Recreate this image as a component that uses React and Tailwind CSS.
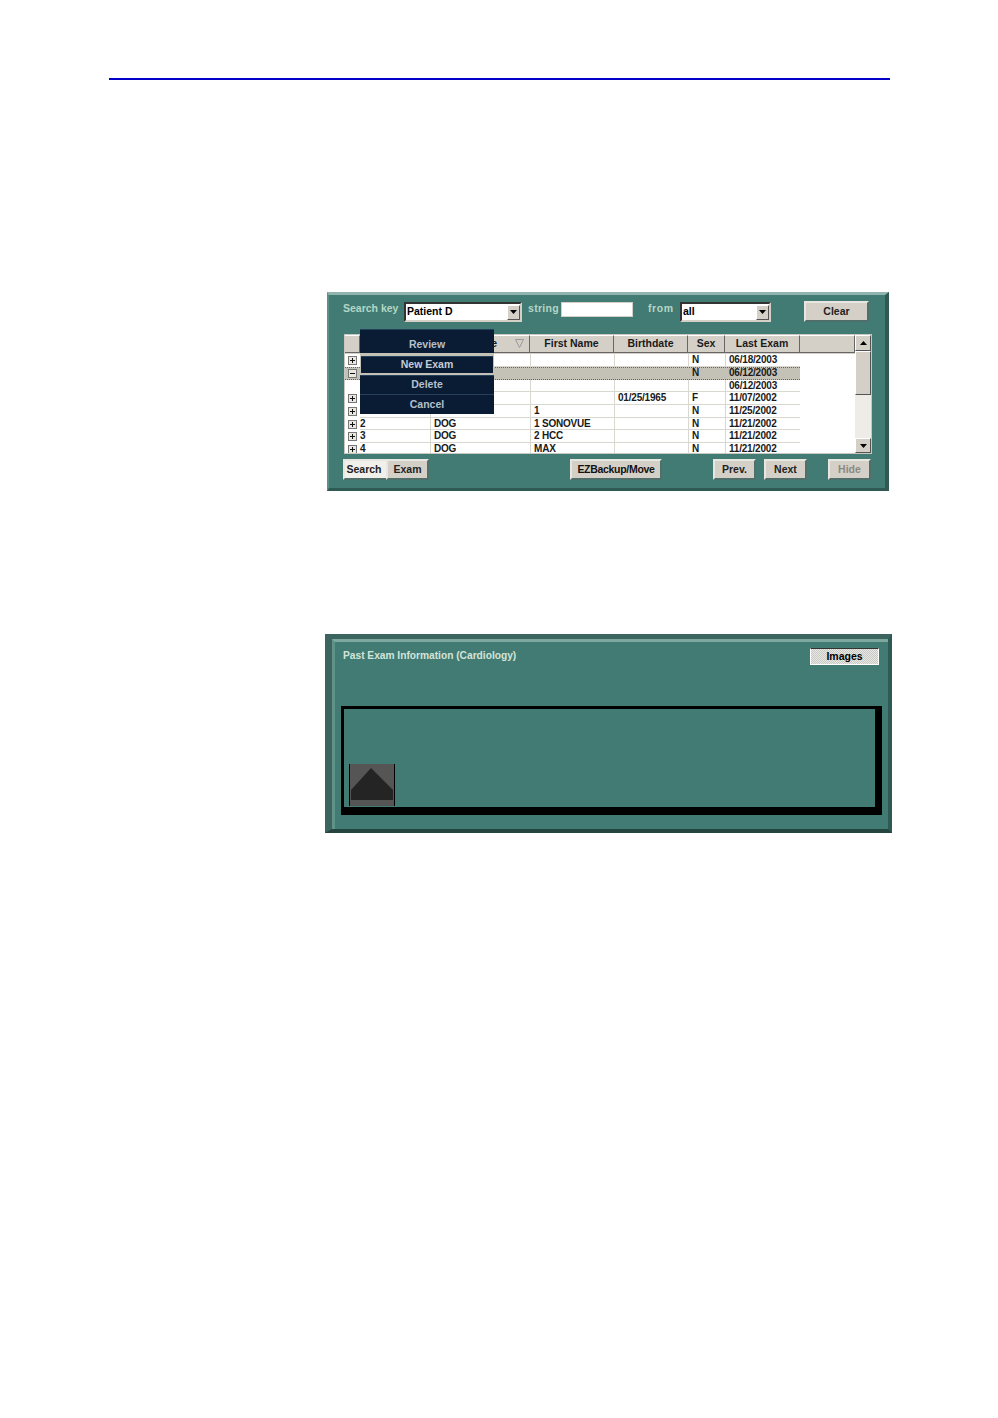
const columns = 'grid-cols-[15px_70px_100px_84px_74px_37px_75px_55px]'

const rows = [
  { id: '', last: '', first: '', birth: '', sex: 'N', exam: '06/18/2003', icon: 'plus', h: 'h-[13px]' },
  { id: '', last: '', first: '', birth: '', sex: 'N', exam: '06/12/2003', icon: 'minus', h: 'h-[13px]', selected: true },
  { id: '', last: '', first: '', birth: '', sex: '', exam: '06/12/2003', icon: '', h: 'h-[12px]' },
  { id: '', last: '', first: '', birth: '01/25/1965', sex: 'F', exam: '11/07/2002', icon: 'plus', h: 'h-[13px]' },
  { id: '', last: '', first: '1', birth: '', sex: 'N', exam: '11/25/2002', icon: 'plus', h: 'h-[13px]' },
  { id: '2', last: 'DOG', first: '1 SONOVUE', birth: '', sex: 'N', exam: '11/21/2002', icon: 'plus', h: 'h-[12px]' },
  { id: '3', last: 'DOG', first: '2 HCC', birth: '', sex: 'N', exam: '11/21/2002', icon: 'plus', h: 'h-[13px]' },
  { id: '4', last: 'DOG', first: 'MAX', birth: '', sex: 'N', exam: '11/21/2002', icon: 'plus', h: 'h-[12px]' },
]

function ExpandIcon({ type }) {
  if (!type) return null
  return (
    <svg width="9" height="9" viewBox="0 0 9 9" className="ml-[3px]">
      <rect x="0.5" y="0.5" width="8" height="8" fill="#e8e8e0" stroke="#777" />
      <path d="M2 4.5h5" stroke="#111" />
      {type === 'plus' && <path d="M4.5 2v5" stroke="#111" />}
    </svg>
  )
}

function Arrow({ up }) {
  return (
    <svg width="7" height="4" viewBox="0 0 7 4">
      <path d={up ? 'M3.5 0L7 4H0z' : 'M0 0h7L3.5 4z'} fill="#000" />
    </svg>
  )
}

function ArrowBox({ up, className }) {
  return (
    <div className={`flex items-center justify-center bg-[#d4d0c8] border border-t-white border-l-white border-r-[#555] border-b-[#555] ${className}`}>
      <Arrow up={up} />
    </div>
  )
}

function Select({ value, width }) {
  return (
    <div className={`h-[20px] flex items-center justify-between bg-white border-2 border-t-[#333] border-l-[#333] border-r-[#d4d0c8] border-b-[#d4d0c8] ${width}`}>
      <span className="pl-[1px] text-[10.5px] font-bold text-black">{value}</span>
      <ArrowBox className="w-[13px] h-[15px]" />
    </div>
  )
}

function Button({ children, className }) {
  return (
    <div className={`h-[21px] flex items-center justify-center bg-[#d4d0c8] border-2 border-t-[#e8e6e0] border-l-[#e8e6e0] border-r-[#4f6f6a] border-b-[#4f6f6a] text-[10.5px] font-bold ${className}`}>
      {children}
    </div>
  )
}

function MenuItem({ children, className }) {
  return (
    <div className={`flex items-center justify-center bg-[#0a1c34] border-t border-t-[#26405c] text-[10.5px] font-bold text-[#b4c0cc] ${className}`}>
      {children}
    </div>
  )
}

function Cell({ children, selected }) {
  return (
    <div className={`flex items-center pl-[3px] border-b border-l ${selected ? 'border-transparent' : 'border-[#d8d8d0]'}`}>
      {children}
    </div>
  )
}

function HeaderCell({ children, className }) {
  return (
    <div className={`relative flex items-center border-r border-r-[#666] border-b border-b-[#666] border-t border-t-white ${className}`}>
      {children}
    </div>
  )
}

function SearchPanel() {
  return (
    <div className="relative ml-[218px] mt-[212px] w-[562px] h-[199px] bg-[#417b73] border-t-[3px] border-l-[2px] border-r-[4px] border-b-[3px] border-t-[#8fb5ae] border-l-[#5d9188] border-r-[#2f5a54] border-b-[#2f5a54] pl-[14px]">
      {/* Search row */}
      <div className="flex items-start h-[39px] pt-[7px] text-[10.5px] font-bold text-[#b5d6c6]">
        <span className="w-[61px] -mt-[1px]">Search key</span>
        <Select value="Patient D" width="w-[118px]" />
        <span className="ml-[6px] w-[33px] -mt-[1px] tracking-[0.3px]">string</span>
        <div className="w-[72px] h-[15px] bg-white border border-[#d4d0c8]" />
        <span className="ml-[15px] w-[32px] -mt-[1px] tracking-[0.6px]">from</span>
        <Select value="all" width="w-[91px]" />
        <Button className="ml-[33px] w-[65px] -mt-[1px] text-[#222]">Clear</Button>
      </div>

      {/* Results table */}
      <div className="flex w-[528px] h-[120px] ml-[1px] overflow-hidden bg-white border border-[#c8c8c0] font-bold text-[10px] tracking-[-0.2px] text-[#1a1a1a]">
        <div className="w-[510px] shrink-0">
          <div className={`grid ${columns} h-[19px] pb-[1px] bg-[#d4d0c8] text-[10.5px] tracking-normal`}>
            <HeaderCell />
            <HeaderCell />
            <HeaderCell className="justify-end pr-[32px]">
              Last Name
              <svg width="9" height="9" viewBox="0 0 9 9" className="absolute right-[5px] top-[3px]">
                <path d="M0.5 0.5h8L4.5 8.5z" fill="none" stroke="#999" />
              </svg>
            </HeaderCell>
            <HeaderCell className="justify-center">First Name</HeaderCell>
            <HeaderCell className="justify-center">Birthdate</HeaderCell>
            <HeaderCell className="justify-center">Sex</HeaderCell>
            <HeaderCell className="justify-center">Last Exam</HeaderCell>
            <HeaderCell />
          </div>
          {rows.map((row, i) => (
            <div
              key={i}
              className={`grid ${columns} ${row.h} leading-none ${row.selected ? 'w-[455px] bg-[#c4c1b6] border-y border-dotted border-[#666]' : ''}`}
            >
              <div className="flex items-center"><ExpandIcon type={row.icon} /></div>
              <div className={`flex items-center border-b ${row.selected ? 'border-transparent' : 'border-[#d8d8d0]'}`}>{row.id}</div>
              <Cell selected={row.selected}>{row.last}</Cell>
              <Cell selected={row.selected}>{row.first}</Cell>
              <Cell selected={row.selected}>{row.birth}</Cell>
              <Cell selected={row.selected}>{row.sex}</Cell>
              <Cell selected={row.selected}>{row.exam}</Cell>
              <div />
            </div>
          ))}
        </div>
        {/* Scrollbar */}
        <div className="w-[16px] flex flex-col bg-[#eeece6]">
          <ArrowBox up className="h-[16px]" />
          <div className="h-[44px] bg-[#d4d0c8] border border-t-white border-l-white border-r-[#555] border-b-[#555]" />
          <div className="flex-1" />
          <ArrowBox className="h-[15px]" />
        </div>
      </div>

      {/* Bottom buttons */}
      <div className="flex mt-[5px] text-[#222]">
        <Button className="w-[43px] pr-[3px] bg-[#f2f0ea] border-r-0">Search</Button>
        <Button className="w-[43px]">Exam</Button>
        <Button className="ml-[141px] w-[92px] tracking-[-0.3px] text-[#111]">EZBackup/Move</Button>
        <Button className="ml-[51px] w-[43px]">Prev.</Button>
        <Button className="ml-[8px] w-[43px]">Next</Button>
        <Button className="ml-[21px] w-[43px] text-[#8a8a84]">Hide</Button>
      </div>

      {/* Context menu */}
      <div className="absolute left-[31px] top-[34px] w-[134px] h-[85px] flex flex-col bg-[#c4c1b6]">
        <MenuItem className="h-[24px] pt-[6px] border-t-[#0a1c34]">Review</MenuItem>
        <div className="h-[3px]" />
        <MenuItem className="h-[17px] mx-[1px] text-[#c4ccd4]">New Exam</MenuItem>
        <div className="h-[2px]" />
        <MenuItem className="h-[19px]">Delete</MenuItem>
        <MenuItem className="h-[20px]">Cancel</MenuItem>
      </div>
    </div>
  )
}

function ExamPanel() {
  return (
    <div className="ml-[216px] mt-[143px] w-[567px] h-[199px] bg-[#417b73] border-t-[5px] border-l-[7px] border-r-[4px] border-b-[4px] border-t-[#3c655f] border-l-[#3c655f] border-r-[#2f5a54] border-b-[#24453f]">
      <div className="h-full border-t-[3px] border-l-[3px] border-t-[#7fa8a0] border-l-[#5f938a]">
        <div className="flex justify-between h-[64px] pl-[8px] pr-[9px] pt-[7px]">
          <span className="text-[10.2px] leading-[14px] font-bold text-[#d4e4d8]">Past Exam Information (Cardiology)</span>
          <div className="w-[69px] h-[17px] -mt-[1px] flex items-center justify-center border border-white border-t-[#333] text-[10.5px] font-bold text-black bg-[repeating-conic-gradient(#e8e8e4_0_25%,#c8c8c4_0_50%)] bg-[length:2px_2px]">
            Images
          </div>
        </div>
        <div className="ml-[6px] w-[541px] h-[109px] flex items-end border-black border-t-[3px] border-l-[3px] border-r-[7px] border-b-[8px] pl-[5px] pb-[1px]">
          <svg width="46" height="42" viewBox="0 0 46 42" className="block">
            <rect width="46" height="42" fill="#555" />
            <path d="M2 26L22 4L44 26V36H2z" fill="#242424" />
            <path d="M0.5 0V42M45.5 0V42" stroke="#000" />
          </svg>
        </div>
      </div>
    </div>
  )
}

export default function App() {
  return (
    <div className="w-[998px] h-[1418px] bg-white overflow-hidden pt-[78px] pl-[109px] font-['Liberation_Sans',Arial,sans-serif]">
      <div className="w-[781px] h-[2px] bg-[#0000c8]" />
      <SearchPanel />
      <ExamPanel />
    </div>
  )
}
